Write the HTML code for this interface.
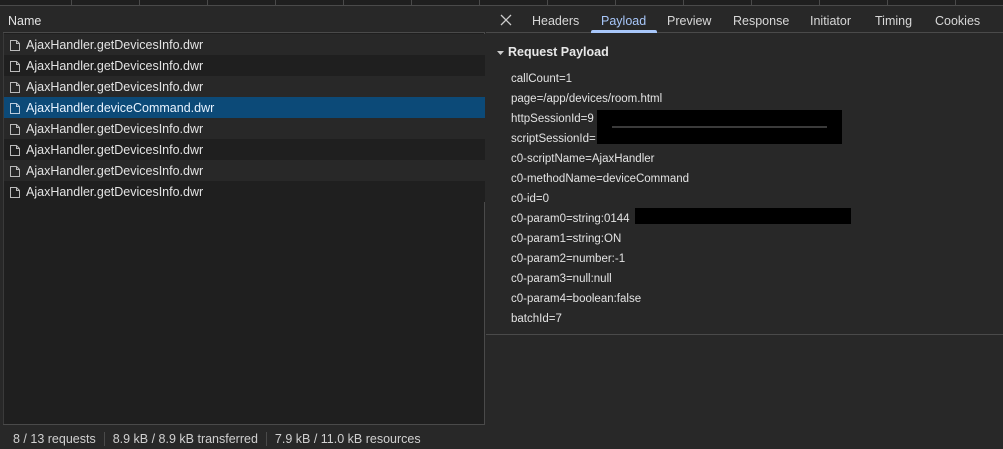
<!DOCTYPE html>
<html><head><meta charset="utf-8"><style>
*{margin:0;padding:0;box-sizing:border-box}
body{width:1003px;height:449px;background:#282828;font-family:"Liberation Sans",sans-serif;color:#e3e3e3;position:relative;overflow:hidden;font-size:12px}
.abs{position:absolute}
.top{left:0;top:0;width:1003px;height:6px;background:#1f1f1f;border-bottom:1px solid #4a4a4a}
.top i{position:absolute;top:0;width:1px;height:6px;background:#4a4a4a}
.left{left:3px;top:6px;width:482px;height:443px;background:#1f1f1f;border-right:1px solid #4a4a4a;border-left:1px solid #3a3a3a;border-bottom-left-radius:8px}
.hdr{left:3px;top:6px;width:482px;height:27px;background:#282828;border-bottom:1px solid #4a4a4a;font-size:12.5px;padding:8px 5px}
.row{left:4px;width:481px;height:21px;font-size:12.5px;padding:4px 0 0 22px;white-space:nowrap}
.row svg{position:absolute;left:5px;top:5px}
.foot{left:3px;top:424px;width:482px;height:25px;background:#282828;border-top:1px solid #4a4a4a;font-size:12.5px;color:#d0d0d0;padding:7px 0 0 10px;white-space:nowrap;border-bottom-left-radius:8px}
.foot span{display:inline-block;padding-right:8px;margin-right:8px;border-right:1px solid #4a4a4a}
.tabs{left:486px;top:6px;width:517px;height:27px;border-bottom:1px solid #4a4a4a;font-size:12.5px}
.tabs b{position:absolute;top:8px;font-weight:normal;color:#d8d8d8}
.pl{left:511px;font-size:11.5px;color:#e3e3e3}
.rd{background:#000}
</style></head><body>
<div class="abs top"><i style="left:71px"></i><i style="left:139px"></i><i style="left:207px"></i><i style="left:275px"></i><i style="left:343px"></i><i style="left:411px"></i><i style="left:479px"></i><i style="left:547px"></i><i style="left:615px"></i><i style="left:683px"></i><i style="left:751px"></i><i style="left:819px"></i><i style="left:887px"></i><i style="left:955px"></i></div>
<div class="abs left"></div>
<div class="abs hdr">Name</div>

<div class="abs row" style="top:34px;background:#282828"><svg width="12" height="13"><path d="M1.5 1.5h6l3 3v7h-9z M7.5 1.5v3h3" fill="none" stroke="#bbb"/></svg>AjaxHandler.getDevicesInfo.dwr</div>
<div class="abs row" style="top:55px;background:#1f1f1f"><svg width="12" height="13"><path d="M1.5 1.5h6l3 3v7h-9z M7.5 1.5v3h3" fill="none" stroke="#bbb"/></svg>AjaxHandler.getDevicesInfo.dwr</div>
<div class="abs row" style="top:76px;background:#282828"><svg width="12" height="13"><path d="M1.5 1.5h6l3 3v7h-9z M7.5 1.5v3h3" fill="none" stroke="#bbb"/></svg>AjaxHandler.getDevicesInfo.dwr</div>
<div class="abs row" style="top:97px;background:#0c4a78;color:#e8f3ff"><svg width="12" height="13"><path d="M1.5 1.5h6l3 3v7h-9z M7.5 1.5v3h3" fill="none" stroke="#bcd"/></svg>AjaxHandler.deviceCommand.dwr</div>
<div class="abs row" style="top:118px;background:#282828"><svg width="12" height="13"><path d="M1.5 1.5h6l3 3v7h-9z M7.5 1.5v3h3" fill="none" stroke="#bbb"/></svg>AjaxHandler.getDevicesInfo.dwr</div>
<div class="abs row" style="top:139px;background:#1f1f1f"><svg width="12" height="13"><path d="M1.5 1.5h6l3 3v7h-9z M7.5 1.5v3h3" fill="none" stroke="#bbb"/></svg>AjaxHandler.getDevicesInfo.dwr</div>
<div class="abs row" style="top:160px;background:#282828"><svg width="12" height="13"><path d="M1.5 1.5h6l3 3v7h-9z M7.5 1.5v3h3" fill="none" stroke="#bbb"/></svg>AjaxHandler.getDevicesInfo.dwr</div>
<div class="abs row" style="top:181px;background:#1f1f1f"><svg width="12" height="13"><path d="M1.5 1.5h6l3 3v7h-9z M7.5 1.5v3h3" fill="none" stroke="#bbb"/></svg>AjaxHandler.getDevicesInfo.dwr</div>

<div class="abs foot"><span>8 / 13 requests</span><span>8.9 kB / 8.9 kB transferred</span>7.9 kB / 11.0 kB resources</div>

<div class="abs tabs">
<svg class="abs" style="left:14px;top:8px" width="12" height="12"><path d="M1 1L11 11M11 1L1 11" stroke="#ccc" stroke-width="1.3"/></svg>
<b style="left:46px">Headers</b>
<b style="left:115px;color:#a8c7fa">Payload</b>
<b style="left:181px">Preview</b>
<b style="left:247px">Response</b>
<b style="left:324px">Initiator</b>
<b style="left:389px">Timing</b>
<b style="left:449px">Cookies</b>
<div class="abs" style="left:105px;top:24px;width:66px;height:3px;background:#a8c7fa;border-radius:2px 2px 0 0"></div>
</div>

<svg class="abs" style="left:497px;top:50px" width="8" height="6"><path d="M0 1h7l-3.5 4z" fill="#ccc"/></svg>
<div class="abs" style="left:508px;top:45px;font-size:12.5px;font-weight:bold;color:#e8e8e8">Request Payload</div>

<div class="abs pl" style="top:73px">callCount=1</div>
<div class="abs pl" style="top:93px">page=/app/devices/room.html</div>
<div class="abs pl" style="top:113px">httpSessionId=9</div>
<div class="abs pl" style="top:133px">scriptSessionId=</div>
<div class="abs pl" style="top:153px">c0-scriptName=AjaxHandler</div>
<div class="abs pl" style="top:173px">c0-methodName=deviceCommand</div>
<div class="abs pl" style="top:193px">c0-id=0</div>
<div class="abs pl" style="top:213px">c0-param0=string:0144</div>
<div class="abs pl" style="top:233px">c0-param1=string:ON</div>
<div class="abs pl" style="top:253px">c0-param2=number:-1</div>
<div class="abs pl" style="top:273px">c0-param3=null:null</div>
<div class="abs pl" style="top:293px">c0-param4=boolean:false</div>
<div class="abs pl" style="top:313px">batchId=7</div>

<div class="abs rd" style="left:597px;top:110px;width:245px;height:34px"></div>
<div class="abs" style="left:612px;top:126px;width:215px;height:2px;background:#3a3a3a"></div>
<div class="abs rd" style="left:635px;top:208px;width:216px;height:16px"></div>

<div class="abs" style="left:486px;top:334px;width:517px;height:1px;background:#4a4a4a"></div>
</body></html>
